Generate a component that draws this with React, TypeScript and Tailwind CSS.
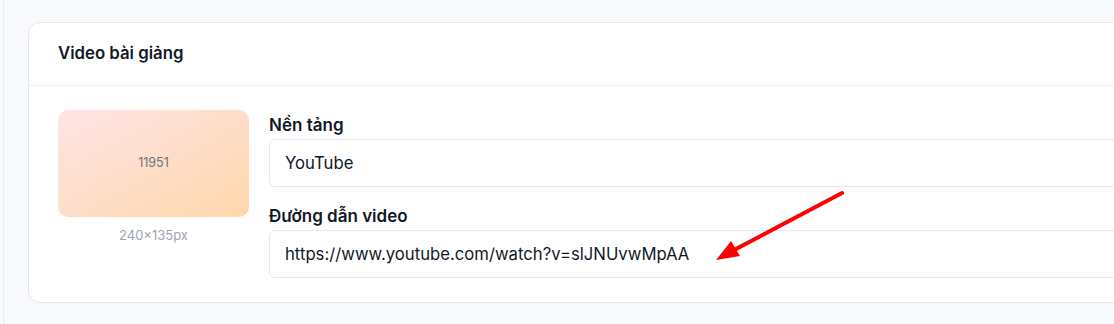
export default function App() {
  return (
    <div
      className="relative h-[324px] w-[1114px] overflow-hidden bg-[#f8f9fb] pl-[28px] pt-[22px]"
      style={{ fontFamily: 'Inter, "Noto Sans", sans-serif' }}
    >
      {/* left edge of the main area */}
      <div className="absolute left-[3px] top-0 h-full w-px bg-[#e8ebf0]" />

      <div className="w-[1120px] rounded-xl border border-[#e3e7ee] bg-white">
        <div className="flex h-[63px] items-center border-b border-[#eef0f3] px-[29px]">
          <h2 className="text-[16.75px] font-semibold text-[#111827]">Video bài giảng</h2>
        </div>

        <div className="flex gap-5 px-[29px] pb-6 pt-6">
          <div className="flex w-[191px] shrink-0 flex-col items-center">
            <div className="flex h-[107px] w-[191px] items-center justify-center rounded-[10px] bg-gradient-to-br from-[#ffe4e6] to-[#fed7aa]">
              <span className="text-[12.5px] text-[#6b7280]">11951</span>
            </div>
            <span className="mt-[9px] text-[13px] text-[#9ca3af]">240×135px</span>
          </div>

          <div className="flex flex-1 flex-col pt-[3px]">
            <label className="mb-[2px] text-[17px] font-semibold leading-6 text-[#111827]">Nền tảng</label>
            <input
              readOnly
              value="YouTube"
              className="h-[48px] w-full rounded-md border border-[#e5e7eb] px-[15px] text-[16.7px] text-[#111827] outline-none"
            />
            <label className="mb-[2px] mt-[17px] text-[17px] font-semibold leading-6 text-[#111827]">Đường dẫn video</label>
            <input
              readOnly
              value="https://www.youtube.com/watch?v=slJNUvwMpAA"
              className="h-[48px] w-full rounded-md border border-[#e5e7eb] px-[15px] text-[16.7px] text-[#111827] outline-none"
            />
          </div>
        </div>
      </div>

      {/* red annotation arrow */}
      <svg className="pointer-events-none absolute left-0 top-0" width="1114" height="324">
        <line x1="842" y1="193" x2="736" y2="249" stroke="#ff0000" strokeWidth="4" strokeLinecap="round" />
        <polygon points="716,260 731,241 740,256" fill="#ff0000" />
      </svg>
    </div>
  );
}
